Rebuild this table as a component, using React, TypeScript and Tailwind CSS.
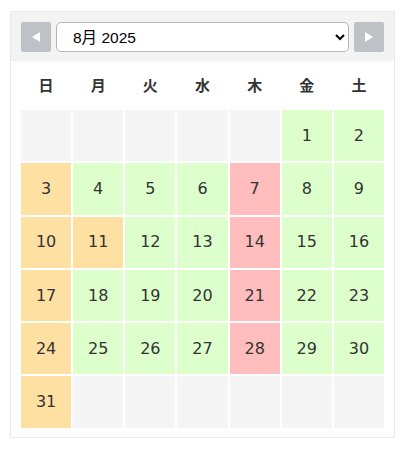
import React from "react";

type Kind = "empty" | "holiday" | "closed" | "open";

const weekdays = ["日", "月", "火", "水", "木", "金", "土"];

const kindClass: Record<Kind, string> = {
  empty: "bg-[#f5f5f5]",
  holiday: "bg-[#ffe0a3]",
  closed: "bg-[#ffbdbd]",
  open: "bg-[#ddffcc]",
};

// August 2025 starts on Friday
const buildDays = () => {
  const cells: { day?: number; kind: Kind }[] = [];
  for (let i = 0; i < 5; i++) cells.push({ kind: "empty" });
  for (let d = 1; d <= 31; d++) {
    const dow = (d + 4) % 7;
    let kind: Kind = "open";
    if (dow === 0 || d === 11) kind = "holiday";
    else if (dow === 4) kind = "closed";
    cells.push({ day: d, kind });
  }
  while (cells.length < 42) cells.push({ kind: "empty" });
  return cells;
};

const Arrow = ({ dir }: { dir: "left" | "right" }) => (
  <button className="w-[30px] h-[30px] shrink-0 rounded-[2px] bg-[#bec2c6] flex items-center justify-center">
    <svg width="10" height="12" viewBox="0 0 10 12">
      {dir === "left" ? (
        <polygon points="9,1 9,11 1,6" fill="#fff" />
      ) : (
        <polygon points="1,1 1,11 9,6" fill="#fff" />
      )}
    </svg>
  </button>
);

export default function App() {
  const days = buildDays();
  return (
    <div className="pl-[10px] pt-[11px] bg-white min-h-[450px]">
      <div className="w-[385px] border border-[#e9e9e9] bg-white">
        <div className="bg-[#f3f3f3] flex items-center gap-[5px] px-[10px] pt-[10px] pb-[9px]">
          <Arrow dir="left" />
          <select
            defaultValue="2025-08"
            className="appearance-auto flex-1 h-[30px] pl-[12px] pr-[6px] rounded-[5px] border border-[#b5b5b5] bg-white text-[15.5px] text-black"
            style={{ fontFamily: '"Liberation Sans", "Noto Sans CJK JP", sans-serif' }}
          >
            <option value="2025-08">8月 2025</option>
          </select>
          <Arrow dir="right" />
        </div>
        <div className="px-[10px] pb-[9px]">
          <div
            className="grid grid-cols-7 gap-x-[2px] h-[49px] items-center text-[15px] font-bold text-[#333]"
            style={{ fontFamily: '"Noto Sans CJK JP", sans-serif' }}
          >
            {weekdays.map((w) => (
              <div key={w} className="text-center">
                {w}
              </div>
            ))}
          </div>
          <div
            className="grid grid-cols-7 gap-[2px] text-[16px] text-[#333]"
            style={{ fontFamily: '"DejaVu Sans", sans-serif' }}
          >
            {days.map((c, i) => (
              <div
                key={i}
                className={`h-[51.3px] flex items-center justify-center ${kindClass[c.kind]}`}
              >
                {c.day ?? ""}
              </div>
            ))}
          </div>
        </div>
      </div>
    </div>
  );
}
